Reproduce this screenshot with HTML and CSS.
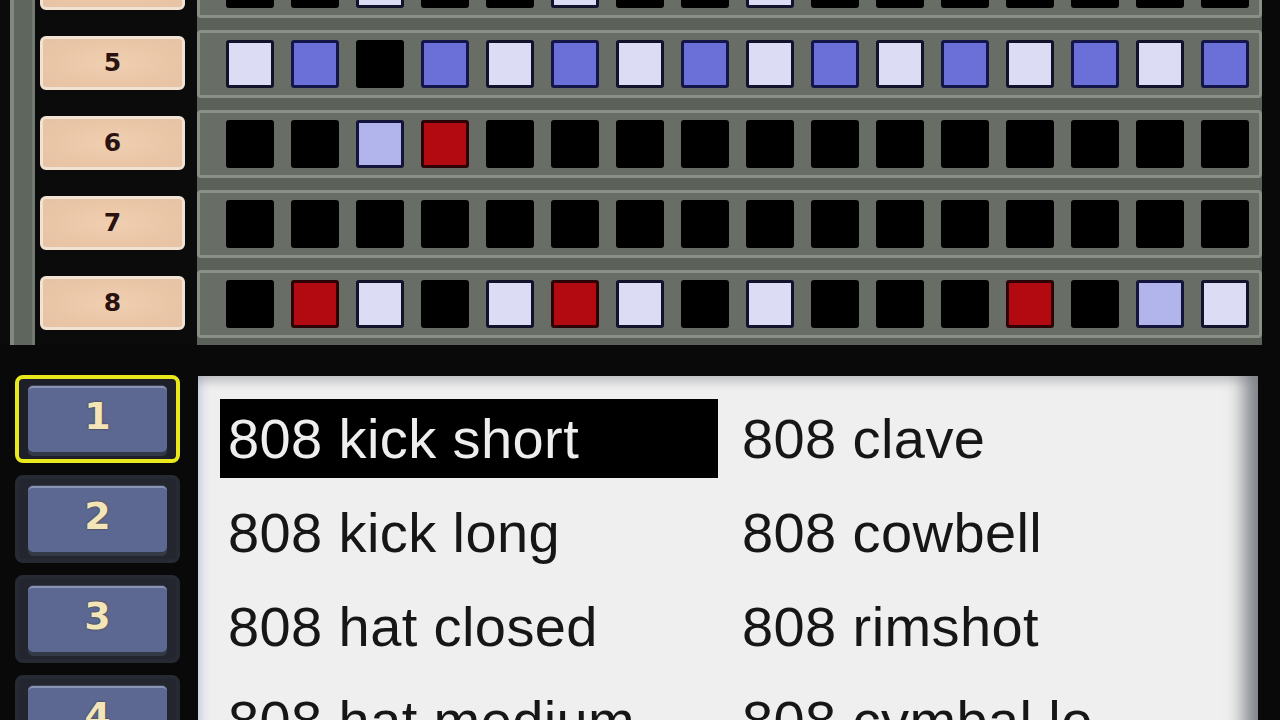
FILE: index.html
```html
<!DOCTYPE html>
<html>
<head>
<meta charset="utf-8">
<link rel="stylesheet" href="styles.css">
</head>
<body>
<div class="screen">
  <div class="top">
    <div class="side">
      <div class="rail"></div>
      <div class="labels">
        <div class="lab">4</div>
        <div class="lab">5</div>
        <div class="lab">6</div>
        <div class="lab">7</div>
        <div class="lab">8</div>
      </div>
    </div>
    <div class="grid">
      <div class="row">
        <span class="c"></span><span class="c"></span><span class="c l"></span><span class="c"></span>
        <span class="c"></span><span class="c l"></span><span class="c"></span><span class="c"></span>
        <span class="c l"></span><span class="c"></span><span class="c"></span><span class="c"></span>
        <span class="c"></span><span class="c"></span><span class="c"></span><span class="c"></span>
      </div>
      <div class="row">
        <span class="c l"></span><span class="c b"></span><span class="c"></span><span class="c b"></span>
        <span class="c l"></span><span class="c b"></span><span class="c l"></span><span class="c b"></span>
        <span class="c l"></span><span class="c b"></span><span class="c l"></span><span class="c b"></span>
        <span class="c l"></span><span class="c b"></span><span class="c l"></span><span class="c b"></span>
      </div>
      <div class="row">
        <span class="c"></span><span class="c"></span><span class="c p"></span><span class="c r"></span>
        <span class="c"></span><span class="c"></span><span class="c"></span><span class="c"></span>
        <span class="c"></span><span class="c"></span><span class="c"></span><span class="c"></span>
        <span class="c"></span><span class="c"></span><span class="c"></span><span class="c"></span>
      </div>
      <div class="row">
        <span class="c"></span><span class="c"></span><span class="c"></span><span class="c"></span>
        <span class="c"></span><span class="c"></span><span class="c"></span><span class="c"></span>
        <span class="c"></span><span class="c"></span><span class="c"></span><span class="c"></span>
        <span class="c"></span><span class="c"></span><span class="c"></span><span class="c"></span>
      </div>
      <div class="row">
        <span class="c"></span><span class="c r"></span><span class="c l"></span><span class="c"></span>
        <span class="c l"></span><span class="c r"></span><span class="c l"></span><span class="c"></span>
        <span class="c l"></span><span class="c"></span><span class="c"></span><span class="c"></span>
        <span class="c r"></span><span class="c"></span><span class="c p"></span><span class="c l"></span>
      </div>
    </div>
  </div>
  <div class="bottom">
    <div class="pads">
      <div class="pad sel"><div class="face">1</div></div>
      <div class="pad"><div class="face">2</div></div>
      <div class="pad"><div class="face">3</div></div>
      <div class="pad"><div class="face">4</div></div>
    </div>
    <div class="list">
      <div class="item sel">808 kick short</div>
      <div class="item">808 clave</div>
      <div class="item">808 kick long</div>
      <div class="item">808 cowbell</div>
      <div class="item">808 hat closed</div>
      <div class="item">808 rimshot</div>
      <div class="item">808 hat medium</div>
      <div class="item">808 cymbal lo</div>
    </div>
  </div>
</div>
</body>
</html>
```
FILE: styles.css
```css
html, body {
  margin: 0;
  padding: 0;
  background: #070807;
}
.screen {
  width: 1280px;
  height: 720px;
  overflow: hidden;
  background: #080908;
}
.top {
  height: 345px;
  display: flex;
  overflow: hidden;
}
.side {
  width: 197px;
  flex-shrink: 0;
  display: flex;
  padding-left: 10px;
  box-sizing: border-box;
  background: #0a0b0a;
}
.rail {
  width: 25px;
  flex-shrink: 0;
  box-sizing: border-box;
  background: #5f665d;
  border-left: 4px solid #818980;
  border-right: 3px solid #737a71;
}
.labels {
  width: 145px;
  margin-left: 5px;
  margin-top: -44px;
  display: flex;
  flex-direction: column;
  gap: 26px;
}
.lab {
  height: 54px;
  flex-shrink: 0;
  box-sizing: border-box;
  border: 3px solid #f1e2d4;
  border-radius: 6px;
  background: radial-gradient(ellipse at 50% 50%, #f0cfb1 0%, #e9c6a6 60%, #e6c3a6 100%);
  color: #2a1210;
  font-family: "DejaVu Sans", sans-serif;
  font-weight: bold;
  font-size: 25px;
  line-height: 48px;
  text-align: center;
}
.grid {
  width: 1065px;
  height: 395px;
  flex-shrink: 0;
  margin-top: -50px;
  box-sizing: border-box;
  background: #5c615a;
  display: flex;
  flex-direction: column;
  gap: 12px;
}
.row {
  height: 68px;
  flex-shrink: 0;
  box-sizing: border-box;
  border: 3px solid #899086;
  border-radius: 4px;
  background: #686d66;
  padding: 7px 10px 7px 26px;
  display: flex;
  gap: 17px;
}
.c {
  width: 48px;
  height: 48px;
  flex-shrink: 0;
  box-sizing: border-box;
  background: #000;
  border: 3px solid #000;
  border-radius: 3px;
}
.c.l {
  background: #dcdcf5;
  border-color: #12122c;
}
.c.b {
  background: #6a70d8;
  border-color: #14164a;
}
.c.p {
  background: #b2b4ec;
  border-color: #14143a;
}
.c.r {
  background: #b20a10;
  border-color: #2c0204;
}
.bottom {
  height: 375px;
  display: flex;
  padding-top: 30px;
  box-sizing: border-box;
}
.pads {
  width: 198px;
  flex-shrink: 0;
  box-sizing: border-box;
  padding-left: 15px;
  display: flex;
  flex-direction: column;
  gap: 12px;
}
.pad {
  width: 165px;
  height: 88px;
  flex-shrink: 0;
  box-sizing: border-box;
  border: 4px solid #262a33;
  border-radius: 8px;
  background: #23262f;
  padding: 7px 9px;
}
.pad.sel {
  border-color: #e8e81c;
  background: #1e2029;
}
.face {
  height: 66px;
  box-sizing: border-box;
  border-top: 2px solid #8a93b3;
  border-radius: 5px;
  background: #5c6892;
  box-shadow: 0 -1px 0 #3a4058, 0 4px 0 #343946;
  color: #f3e5b8;
  font-family: "DejaVu Sans", sans-serif;
  font-weight: bold;
  font-size: 38px;
  line-height: 56px;
  text-align: center;
  text-shadow: 0 0 2px #3a3020;
}
.list {
  width: 1060px;
  flex-shrink: 0;
  margin-top: 1px;
  height: 380px;
  box-sizing: border-box;
  background: #efefef;
  padding: 23px 0 0 22px;
  display: grid;
  grid-template-columns: 498px 498px;
  grid-auto-rows: 79px;
  column-gap: 16px;
  row-gap: 15px;
  align-content: start;
  box-shadow: inset 0 12px 10px -6px rgba(120, 124, 130, 0.35),
              inset -26px 0 18px -12px rgba(90, 96, 104, 0.75),
              inset 10px 0 8px -6px rgba(200, 206, 226, 0.9);
}
.item {
  font-family: "Liberation Sans", Arial, sans-serif;
  font-size: 56px;
  line-height: 79px;
  letter-spacing: 0.4px;
  color: #161616;
  padding-left: 8px;
  white-space: nowrap;
  overflow: hidden;
}
.item.sel {
  background: #000;
  color: #eeeeee;
}
```
